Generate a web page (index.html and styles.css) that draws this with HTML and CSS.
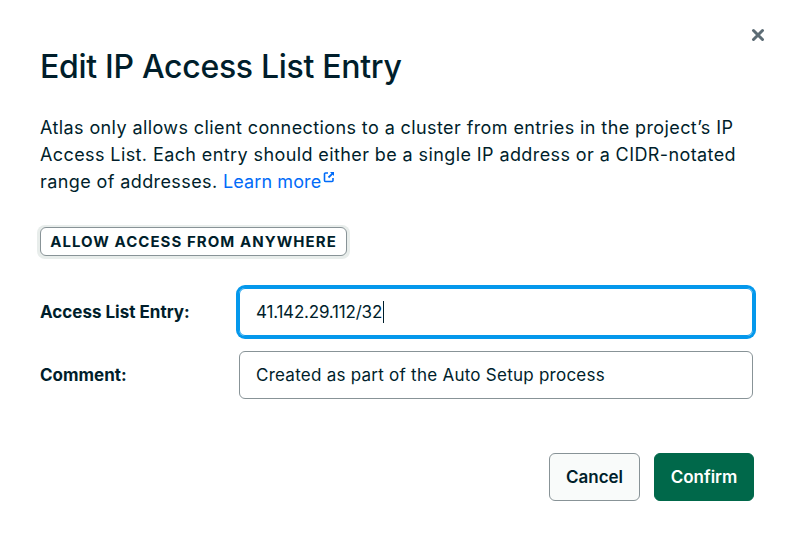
FILE: index.html
```html
<!DOCTYPE html>
<html>
<head>
<meta charset="utf-8">
<link rel="stylesheet" href="styles.css">
</head>
<body>
<div class="dialog">
  <button class="close" aria-label="Close">
    <svg width="14" height="14" viewBox="0 0 14 14"><path d="M2.5 2.5 L11.5 11.5 M11.5 2.5 L2.5 11.5" stroke="#5c6c75" stroke-width="3" stroke-linecap="round"/></svg>
  </button>
  <h1 class="title">Edit IP Access List Entry</h1>
  <p class="desc">Atlas only allows client connections to a cluster from entries in the project’s IP Access List. Each entry should either be a single IP address or a CIDR-notated range of addresses. <a class="link" href="#">Learn more</a><svg class="ext" width="12" height="12" viewBox="0 0 12 12"><path d="M5 2 H2.5 A1 1 0 0 0 1.5 3 V9.5 A1 1 0 0 0 2.5 10.5 H9 A1 1 0 0 0 10 9.5 V7" fill="none" stroke="#016bf8" stroke-width="1.6"/><path d="M7 1 H11 V5 Z" fill="#016bf8"/><path d="M10.2 1.8 L5.5 6.5" stroke="#016bf8" stroke-width="1.8"/></svg></p>
  <div class="anywhere-wrap"><button class="anywhere">ALLOW ACCESS FROM ANYWHERE</button></div>
  <div class="form">
    <div class="row">
      <label class="label">Access List Entry:</label>
      <div class="input focused">41.142.29.112/32<span class="caret"></span></div>
    </div>
    <div class="row">
      <label class="label">Comment:</label>
      <div class="input">Created as part of the Auto Setup process</div>
    </div>
  </div>
  <div class="footer">
    <button class="btn cancel">Cancel</button>
    <button class="btn confirm">Confirm</button>
  </div>
</div>
</body>
</html>
```
FILE: styles.css
```css
html, body {
  margin: 0;
  padding: 0;
  background: #ffffff;
}
body {
  font-family: "Inter", "Noto Sans", sans-serif;
  color: #001e2b;
}
.dialog {
  position: relative;
  padding: 47px 36px 0 40px;
}
.close {
  position: absolute;
  top: 28px;
  right: 25px;
  background: none;
  border: none;
  padding: 0;
  width: 14px;
  height: 14px;
  display: flex;
}
.title {
  margin: 0;
  font-size: 32px;
  line-height: 40px;
  font-weight: 500;
  letter-spacing: -0.3px;
  color: #001e2b;
}
.desc {
  margin: 27px 0 0 0;
  font-size: 18px;
  line-height: 27px;
  letter-spacing: 0.4px;
  color: #001e2b;
  max-width: 724px;
}
.link {
  color: #016bf8;
  text-decoration: none;
  letter-spacing: 0.1px;
}
.ext {
  vertical-align: 5px;
  margin-left: 2px;
}
.anywhere-wrap {
  margin-top: 30px;
  display: inline-flex;
  padding: 2px 3px 3px 3px;
  margin-left: -3px;
  background: #e8edeb;
  border-radius: 8px;
}
.anywhere {
  font-family: "Inter", sans-serif;
  font-weight: 700;
  font-size: 15px;
  letter-spacing: 1.05px;
  color: #001e2b;
  background: #ffffff;
  border: 1px solid #889397;
  border-radius: 6px;
  height: 29px;
  width: 307px;
  padding: 0;
}
.form {
  margin-top: 29px;
  display: flex;
  flex-direction: column;
  gap: 15px;
  width: 713px;
}
.row {
  display: flex;
  align-items: center;
}
.label {
  width: 199px;
  font-weight: 700;
  font-size: 17px;
  color: #001e2b;
}
.input {
  flex: 1;
  box-sizing: border-box;
  height: 48px;
  border: 1px solid #889397;
  border-radius: 6px;
  padding: 0 16px;
  display: flex;
  align-items: center;
  font-size: 17px;
  letter-spacing: 0.25px;
  color: #001e2b;
}
.input.focused {
  border-color: #0498ec;
  box-shadow: 0 0 0 3px #0498ec;
  letter-spacing: -0.2px;
}
.caret {
  display: inline-block;
  width: 1px;
  height: 22px;
  background: #001e2b;
  margin-left: 1px;
}
.footer {
  margin-top: 54px;
  display: flex;
  justify-content: flex-end;
  gap: 14px;
}
.btn {
  font-family: "Inter", sans-serif;
  height: 48px;
  border-radius: 6px;
  font-size: 17px;
  font-weight: 600;
  padding: 0;
}
.cancel {
  width: 91px;
  background: #f9fbfa;
  border: 1px solid #889397;
  color: #001e2b;
}
.confirm {
  width: 100px;
  background: #00684a;
  border: 1px solid #00684a;
  color: #ffffff;
}
```
